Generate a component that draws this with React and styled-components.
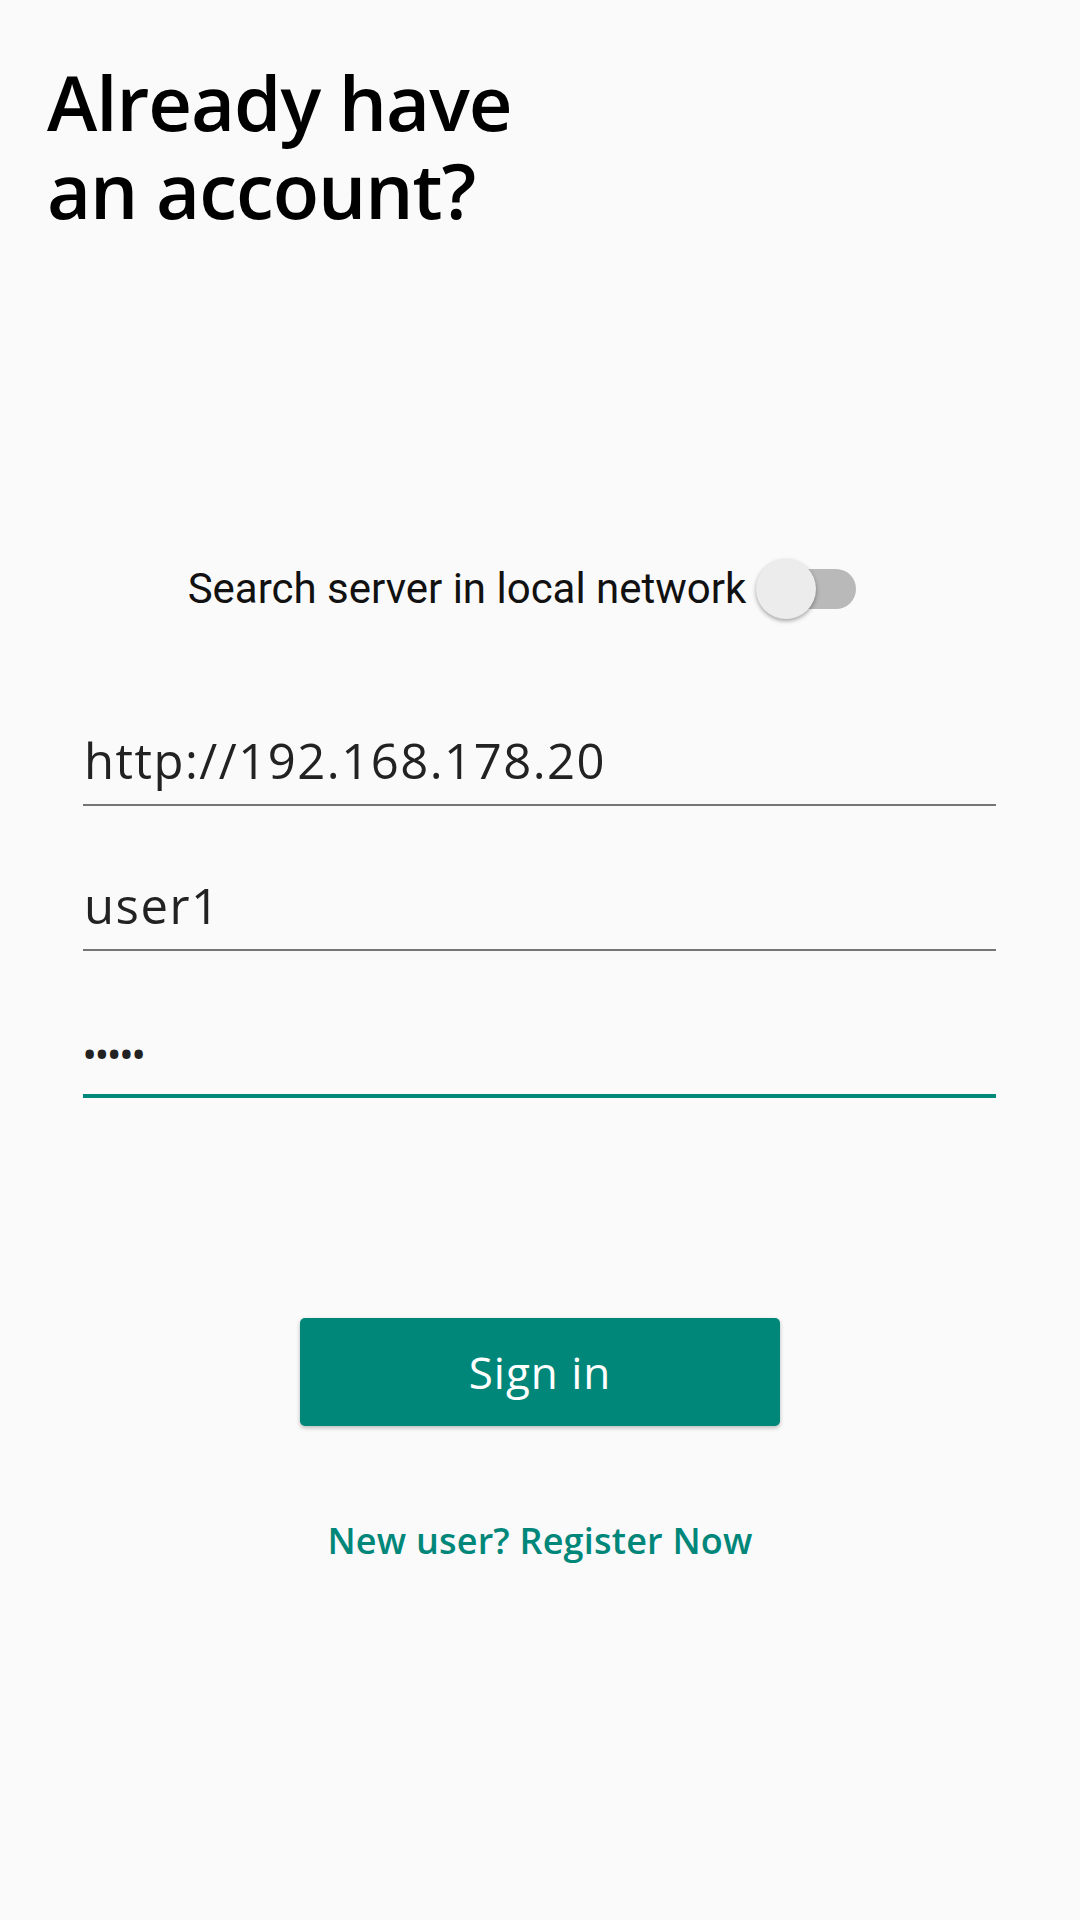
import React from "react";
import styled, { createGlobalStyle } from "styled-components";

const Global = createGlobalStyle`
  html, body { margin: 0; padding: 0; background: #fafafa; }
  * { box-sizing: border-box; }
`;

const Page = styled.div`
  width: 1080px;
  min-height: 1920px;
  background: #fafafa;
  display: flex;
  flex-direction: column;
  font-family: "Open Sans", "Noto Sans", sans-serif;
`;

const Title = styled.h1`
  margin: 0;
  padding: 58px 0 0 47px;
  font-size: 76px;
  line-height: 88px;
  font-weight: 600;
  color: #000;
  letter-spacing: -1px;
`;

const TitleLine = styled.span`
  display: block;
`;

const SwitchRow = styled.div`
  margin-top: 330px;
  display: flex;
  align-items: center;
  justify-content: center;
  padding-right: 36px;
`;

const SwitchLabel = styled.span`
  font-family: Roboto, sans-serif;
  font-size: 42px;
  color: #111;
`;

const Track = styled.div`
  position: relative;
  width: 88px;
  height: 40px;
  border-radius: 20px;
  background: #b9b9b9;
  margin-left: 22px;
`;

const Thumb = styled.div`
  position: absolute;
  left: -12px;
  top: -10px;
  width: 60px;
  height: 60px;
  border-radius: 50%;
  background: #ececec;
  box-shadow: 0 2px 4px rgba(0, 0, 0, 0.35);
`;

const Form = styled.div`
  margin-top: 48px;
  padding: 0 84px 0 83px;
  display: flex;
  flex-direction: column;
`;

const Field = styled.div`
  height: ${(p) => (p.$focused ? "147px" : "145px")};
  display: flex;
  align-items: flex-end;
  padding-bottom: ${(p) => (p.$focused ? "30px" : "19px")};
  border-bottom: ${(p) => (p.$focused ? "4px solid #00897b" : "2px solid #757575")};
  font-size: 49px;
  line-height: 49px;
  letter-spacing: 1.5px;
  color: #222;
  padding-left: 1px;
`;

const Dots = styled.span`
  font-size: 30px;
  letter-spacing: 1px;
  line-height: 20px;
  font-weight: 700;
`;

const SignIn = styled.button`
  align-self: center;
  margin-top: 220px;
  width: 480px;
  height: 108px;
  border: none;
  border-radius: 5px;
  background: #00877a;
  color: #fff;
  font-family: "Open Sans", sans-serif;
  font-size: 44px;
  letter-spacing: 1px;
  font-weight: 500;
  box-shadow: 0 2px 4px rgba(0, 0, 0, 0.25);
`;

const RegisterLink = styled.a`
  align-self: center;
  margin-top: 90px;
  font-size: 36px;
  letter-spacing: 0.2px;
  font-weight: 600;
  color: #00877a;
  text-decoration: none;
`;

export default function App() {
  return (
    <Page>
      <Global />
      <Title>
        <TitleLine>Already have</TitleLine>
        <TitleLine>an account?</TitleLine>
      </Title>
      <SwitchRow>
        <SwitchLabel>Search server in local network</SwitchLabel>
        <Track>
          <Thumb />
        </Track>
      </SwitchRow>
      <Form>
        <Field>http://192.168.178.20</Field>
        <Field>user1</Field>
        <Field $focused>
          <Dots>•••••</Dots>
        </Field>
      </Form>
      <SignIn>Sign in</SignIn>
      <RegisterLink href="#">New user? Register Now</RegisterLink>
    </Page>
  );
}
